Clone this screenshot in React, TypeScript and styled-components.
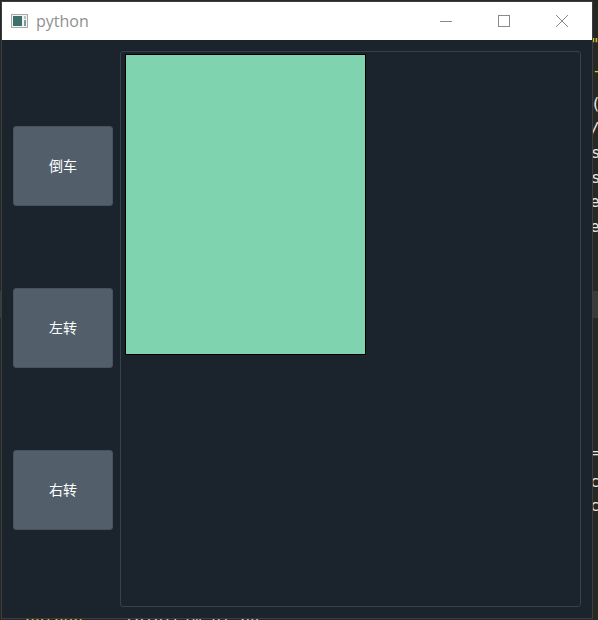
import React from "react";
import styled, { createGlobalStyle } from "styled-components";

const Global = createGlobalStyle`
  html, body { margin: 0; padding: 0; }
  body {
    width: 598px; height: 620px; overflow: hidden;
    background: #272822;
    font-family: "Noto Sans", "Noto Sans CJK SC", sans-serif;
  }
`;

const Desktop = styled.div`
  position: relative;
  width: 598px;
  height: 620px;
  overflow: hidden;
  background: #272822;
`;

const Editor = styled.div`
  position: absolute;
  inset: 0;
  font-family: "DejaVu Sans Mono", monospace;
  font-size: 16px;
`;

const Frag = styled.span<{ $c: string }>`
  position: absolute;
  color: ${(p) => p.$c};
  white-space: pre;
  line-height: 18px;
`;

const HighlightLine = styled.div`
  position: absolute;
  left: 0; right: 0;
  top: 291px; height: 27px;
  background: #3a3b36;
`;

const Window = styled.div`
  position: absolute;
  left: 2px;
  top: 2px;
  width: 590px;
  height: 616px;
  display: flex;
  flex-direction: column;
  background: #1b232d;
  box-shadow: 0 0 0 1px #3b3f44;
`;

const TitleBar = styled.div`
  height: 38px;
  flex: none;
  background: #ffffff;
  display: flex;
  align-items: center;
  padding-left: 9px;
`;

const Title = styled.span`
  margin-left: 8px;
  font-family: "Open Sans", "Noto Sans", sans-serif;
  font-size: 16px;
  color: #909090;
  margin-top: -1px;
`;

const Controls = styled.div`
  margin-left: auto;
  display: flex;
  align-items: center;
  height: 100%;
  padding-right: 1px;
`;

const Ctrl = styled.div`
  width: 58px;
  height: 100%;
  display: flex;
  align-items: center;
  justify-content: center;
`;

const Body = styled.div`
  flex: 1;
  display: flex;
  gap: 7px;
  padding: 11px;
  min-height: 0;
`;

const ButtonCol = styled.div`
  width: 100px;
  display: flex;
  flex-direction: column;
  justify-content: center;
  gap: 82px;
  padding-bottom: 3px;
`;

const ActionButton = styled.button`
  width: 100px;
  height: 80px;
  background: #525f6b;
  border: 1px solid #46525e;
  border-radius: 3px;
  color: #ffffff;
  font-family: "Noto Sans CJK SC", "Noto Sans", sans-serif;
  font-size: 14px;
  padding: 0 0 1px 0;
  cursor: pointer;
`;

const Panel = styled.div`
  flex: 1;
  border: 1px solid #36414c;
  border-radius: 3px;
  padding: 2px 4px;
`;

const Canvas = styled.div`
  width: 239px;
  height: 299px;
  background: #7fd3ae;
  border: 1px solid #000000;
`;

const AppIcon = () => (
  <svg width="17" height="14" viewBox="0 0 17 14">
    <rect x="0.5" y="0.5" width="16" height="13" fill="#f2f2f2" stroke="#a8a8a8" />
    <rect x="2" y="2" width="9" height="10" fill="#3e6f6c" />
    <rect x="13" y="2" width="2" height="3" fill="#bdbdbd" />
    <rect x="13" y="6" width="2" height="6" fill="#6fa39a" />
  </svg>
);

const MinIcon = () => (
  <svg width="14" height="14" viewBox="0 0 14 14">
    <line x1="1" y1="7.5" x2="13" y2="7.5" stroke="#8a8a8a" strokeWidth="1" />
  </svg>
);
const MaxIcon = () => (
  <svg width="14" height="14" viewBox="0 0 14 14">
    <rect x="1.5" y="1.5" width="11" height="11" fill="none" stroke="#8a8a8a" strokeWidth="1" />
  </svg>
);
const CloseIcon = () => (
  <svg width="14" height="14" viewBox="0 0 14 14">
    <path d="M1 1 L13 13 M13 1 L1 13" stroke="#8a8a8a" strokeWidth="1" />
  </svg>
);

export default function App() {
  return (
    <>
      <Global />
      <Desktop>
        <Editor>
          <HighlightLine />
          <Frag $c="#d4c82a" style={{ left: 590, top: 36 }}>"s</Frag>
          <Frag $c="#d4c82a" style={{ left: 592, top: 62 }}>-</Frag>
          <Frag $c="#e6e6e6" style={{ left: 591, top: 95 }}>(s</Frag>
          <Frag $c="#e6e6e6" style={{ left: 590, top: 120 }}>/i</Frag>
          <Frag $c="#e6e6e6" style={{ left: 591, top: 144 }}>s</Frag>
          <Frag $c="#e6e6e6" style={{ left: 591, top: 169 }}>s</Frag>
          <Frag $c="#e6e6e6" style={{ left: 590, top: 193 }}>ee</Frag>
          <Frag $c="#e6e6e6" style={{ left: 590, top: 218 }}>ee</Frag>
          <Frag $c="#e6e6e6" style={{ left: 590, top: 444 }}>==</Frag>
          <Frag $c="#e6e6e6" style={{ left: 590, top: 473 }}>cc</Frag>
          <Frag $c="#e6e6e6" style={{ left: 590, top: 497 }}>cs</Frag>
          <Frag $c="#d4c82a" style={{ left: 25, top: 612 }}>python</Frag>
          <Frag $c="#d0d0d0" style={{ left: 115, top: 612 }}>.\bin\sim_ui.py</Frag>
        </Editor>
        <Window>
          <TitleBar>
            <AppIcon />
            <Title>python</Title>
            <Controls>
              <Ctrl><MinIcon /></Ctrl>
              <Ctrl><MaxIcon /></Ctrl>
              <Ctrl><CloseIcon /></Ctrl>
            </Controls>
          </TitleBar>
          <Body>
            <ButtonCol>
              <ActionButton>倒车</ActionButton>
              <ActionButton>左转</ActionButton>
              <ActionButton>右转</ActionButton>
            </ButtonCol>
            <Panel>
              <Canvas />
            </Panel>
          </Body>
        </Window>
      </Desktop>
    </>
  );
}
